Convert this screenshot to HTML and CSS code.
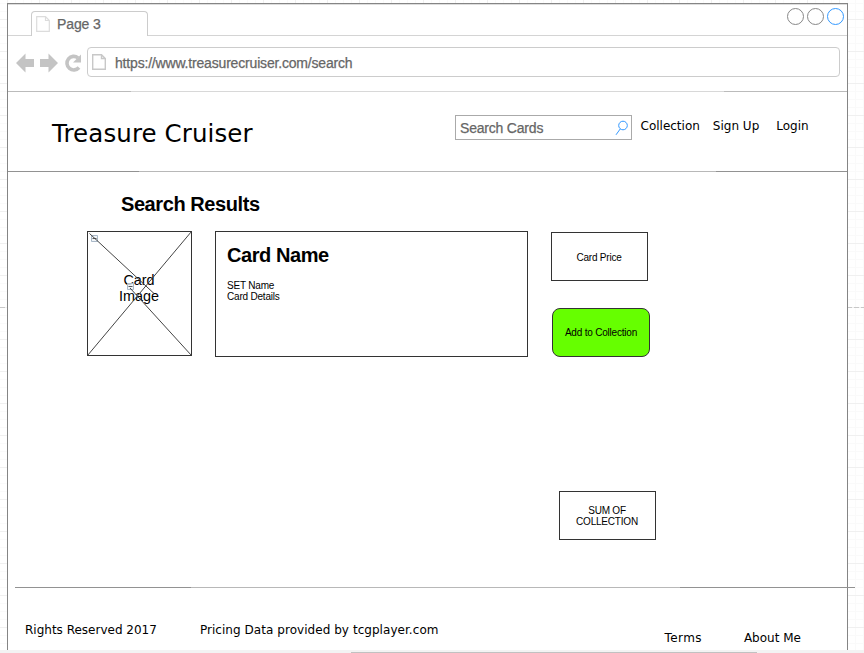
FILE: index.html
```html
<!DOCTYPE html>
<html lang="en">
<head>
<meta charset="utf-8">
<title>Treasure Cruiser</title>
<link rel="stylesheet" href="styles.css">
</head>
<body>
<div class="canvas">
  <main class="window">
    <div class="tabs">
      <div class="tab">
        <svg class="page-icon" width="14" height="16" viewBox="0 0 14 16"><path d="M.7.7H9.5L13.3 4.5V15.3H.7ZM9.5.7V4.5H13.3"/></svg>
        <span>Page 3</span>
      </div>
      <div class="controls"><i></i><i></i><i class="active"></i></div>
    </div>
    <div class="toolbar">
      <svg class="nav-icons" width="68" height="20" viewBox="0 0 68 20">
        <path class="solid" d="M0 10 9.5 .5V6H18V14H9.5V19.5Z"/>
        <path class="solid" d="M42 10 32.5 .5V6H24V14H32.5V19.5Z"/>
        <path class="ring" d="M63 14.5A6.8 6.8 0 1 1 62 4.8"/>
        <path class="solid" d="M65 1.5V9.5H57Z"/>
      </svg>
      <div class="address">
        <svg class="page-icon strong" width="14" height="16" viewBox="0 0 14 16"><path d="M.7.7H9.5L13.3 4.5V15.3H.7ZM9.5.7V4.5H13.3"/></svg>
        <span>https://www.treasurecruiser.com/search</span>
      </div>
    </div>
    <div class="rule rule-light"></div>
    <header class="site-header">
      <h1>Treasure Cruiser</h1>
      <div class="search">
        <span>Search Cards</span>
        <svg width="14" height="16" viewBox="0 0 14 16"><circle cx="8" cy="5.5" r="4.3"/><path d="M5.2 9 1 14.8"/></svg>
      </div>
      <nav><a>Collection</a><a>Sign Up</a><a>Login</a></nav>
    </header>
    <div class="rule rule-header"></div>
    <section class="results">
      <h2>Search Results</h2>
      <div class="result">
        <div class="card-image">
          <span>Card<br>Image</span>
          <svg width="105" height="125" viewBox="0 0 105 125">
            <g class="fold"><path d="M4.5 4.5h6v6h-6zM40.5 52.5h6v6h-6z"/><path class="minus" d="M5.5 7.5h4M41.5 55.5h4"/></g>
            <path class="cross" d="M2.5 2.5 67 62.5M104.5.5.5 124.5M43 57 104.5 124.5"/>
          </svg>
        </div>
        <div class="card-details">
          <h2>Card Name</h2>
          <p>SET Name<br>Card Details</p>
        </div>
        <div class="actions">
          <div class="box">Card Price</div>
          <div class="box add">Add to Collection</div>
        </div>
      </div>
      <div class="box sum">SUM OF<br>COLLECTION</div>
    </section>
    <div class="rule rule-footer"></div>
    <footer>
      <span>Rights Reserved 2017</span>
      <span class="pricing">Pricing Data provided by tcgplayer.com</span>
      <span class="terms">Terms</span>
      <span class="about">About Me</span>
    </footer>
  </main>
  <div class="scroll-track"><div class="thumb"></div></div>
</div>
</body>
</html>
```
FILE: styles.css
```css
* { box-sizing: border-box; }
body { margin: 0; font-family: "Liberation Sans", Arial, sans-serif; color: #000; }
h1, h2, p { margin: 0; }
svg { display: block; flex: none; fill: none; }

.canvas {
  width: 864px;
  height: 653px;
  overflow: hidden;
  padding: 3px 0 0 7px;
  background:
    repeating-linear-gradient(90deg, #c8c8c8 0 5px, transparent 5px 7px) 0 307px / 100% 1px no-repeat,
    linear-gradient(#f0f0f0 1px, transparent 1px) 0 19px / 32px 32px,
    linear-gradient(90deg, #f0f0f0 1px, transparent 1px) 7px 0 / 32px 32px,
    linear-gradient(#fafafa 1px, transparent 1px) 0 3px / 8px 8px,
    linear-gradient(90deg, #fafafa 1px, transparent 1px) 7px 0 / 8px 8px,
    #fff;
}
.window {
  width: 841px;
  height: 647px;
  border: 1px solid #858585;
  border-bottom: 0;
  background: #fff;
  box-shadow: inset 0 1px #ddd;
}

.tabs {
  display: flex;
  justify-content: space-between;
  align-items: flex-start;
  height: 32px;
  padding: 4px 3px 0 23px;
  background: linear-gradient(#d4d4d4, #d4d4d4) bottom / 100% 1px no-repeat;
}
.tab {
  display: flex;
  align-items: center;
  gap: 7px;
  width: 117px;
  height: 25px;
  margin-top: 3px;
  padding: 0 0 0 4px;
  border: 1px solid #ccc;
  border-bottom: 0;
  border-radius: 4px 4px 0 0;
  background: #fff;
  font-size: 14px;
  letter-spacing: -.12px;
  color: #666;
  -webkit-text-stroke: .25px #666;
}
.page-icon { stroke: #dcdcdc; stroke-width: 1.2; }
.strong { stroke: #c8c8c8; stroke-width: 1.4; }
.controls { display: flex; gap: 3px; }
.controls i { width: 17px; height: 17px; border: 1px solid #888; border-radius: 50%; }
.controls .active { border-color: #3399ff; }

.toolbar { display: flex; gap: 3px; height: 55px; padding: 11px 7px 0 8px; }
.nav-icons { margin-top: 6px; }
.solid { fill: #c4c4c4; }
.ring { stroke: #c4c4c4; stroke-width: 3.6; }
.address {
  display: flex;
  align-items: center;
  gap: 9px;
  width: 753px;
  height: 30px;
  padding-left: 4px;
  border: 1px solid #ccc;
  border-radius: 4px;
  font-size: 14px;
  letter-spacing: -.18px;
  color: #666;
  -webkit-text-stroke: .25px #666;
}
.address span { margin-top: 1px; }

.rule { height: 1px; }
.rule-light { background: linear-gradient(90deg, #bbb 123px, #d8d8d8 123px 716px, #bbb 716px); }
.rule-header { background: linear-gradient(90deg, #929292 131px, #b8b8b8 131px 708px, #929292 708px); }
.rule-footer { width: 840px; margin-left: 7px; background: linear-gradient(90deg, #929292 176px, #b8b8b8 176px 665px, #929292 665px); }

.site-header { display: flex; height: 79px; padding-left: 44px; font-family: "DejaVu Sans", Verdana, sans-serif; }
h1 { width: 403px; margin-top: 27px; font-size: 24.5px; line-height: 30px; font-weight: 400; letter-spacing: .1px; }
.search {
  display: flex;
  justify-content: space-between;
  align-items: center;
  width: 177px;
  height: 25px;
  margin-top: 23px;
  padding: 0 2px 0 4px;
  border: 1px solid #aaa;
  font: 14px "Liberation Sans", Arial, sans-serif;
  letter-spacing: -.2px;
  color: #666;
  -webkit-text-stroke: .25px #666;
}
.search span { margin-top: 1px; }
.search svg { margin-top: 1px; stroke: #3399ff; stroke-width: 1; }
nav { display: flex; gap: 13px; margin: 26px 0 0 8.5px; font-size: 12px; line-height: 16px; white-space: nowrap; }
nav a:last-child { margin-left: 4px; }

.results { height: 415px; padding: 21px 0 0 79px; }
h2 { font-size: 20px; line-height: 22px; font-weight: 700; letter-spacing: -.42px; }
.results > h2 { margin-left: 34px; }
.result { display: flex; margin-top: 16px; }
.card-image {
  display: grid;
  place-items: center;
  width: 105px;
  height: 125px;
  border: 1px solid #333;
  font-size: 14.4px;
  line-height: 16px;
  text-align: center;
}
.card-image > * { grid-area: 1 / 1; }
.card-image span { margin: -12px 1px 0 0; }
.card-image svg { margin: -1px; }
.cross { stroke: #444; stroke-width: 1; }
.fold { fill: #eef2f6; fill-opacity: .8; stroke: #a9b8c8; }
.fold .minus { stroke: #555; }
.card-details { width: 313px; height: 126px; margin-left: 23px; padding: 12px 11px; border: 1px solid #333; }
.card-details p { margin-top: 14px; font-size: 10px; line-height: 11px; letter-spacing: -.2px; }
.actions { margin: 1px 0 0 23px; }
.box {
  display: flex;
  align-items: center;
  justify-content: center;
  width: 97px;
  height: 49px;
  padding-right: 1px;
  border: 1px solid #333;
  background: #fff;
  font-size: 10px;
  line-height: 11px;
  letter-spacing: -.2px;
  text-align: center;
}
.actions .box { padding-top: 2px; }
.actions .add { width: 98px; margin: 27px 0 0 1px; padding: 0; border-radius: 8px; background: #66ff00; }
.sum { margin: 134px 0 0 472px; }

footer { display: flex; padding: 34px 0 0 17px; font: 12px/16px "DejaVu Sans", Verdana, sans-serif; white-space: nowrap; }
.pricing { margin-left: 43px; letter-spacing: .05px; }
.terms { margin: 8px 0 0 226px; letter-spacing: .4px; }
.about { margin: 8px 0 0 42px; }

.scroll-track { height: 3px; margin-left: -7px; padding: 2px 0 0 351px; background: #f3f3f3; }
.thumb { width: 406px; height: 1px; background: #c1c1c1; }
```
